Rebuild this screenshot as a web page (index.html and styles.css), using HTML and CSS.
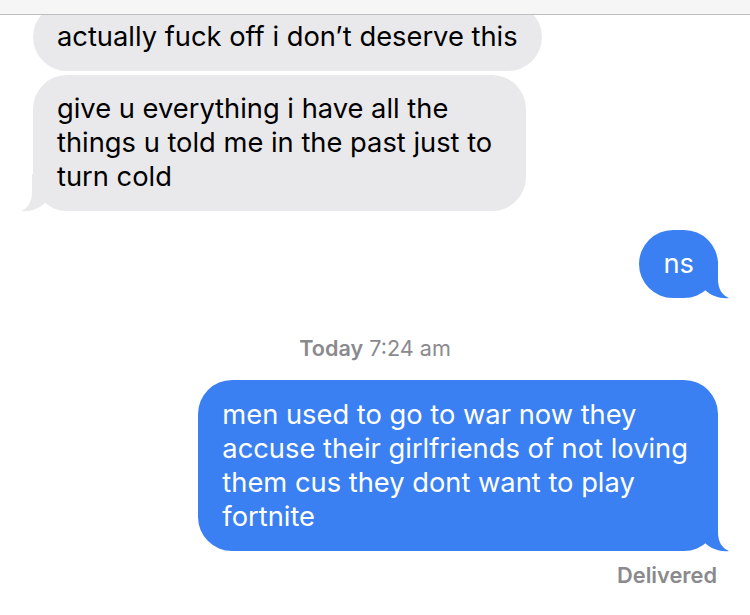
FILE: index.html
```html
<!DOCTYPE html>
<html lang="en">
<head>
<meta charset="utf-8">
<title>Messages</title>
<link rel="stylesheet" href="styles.css">
</head>
<body>
<div class="screen">
  <div class="topbar"></div>
  <div class="thread">
    <div class="msg in">actually fuck off i don’t deserve this</div>
    <div class="msg in gap-s wrapped">give u everything i have all the<br>things u told me in the past just to<br>turn cold
      <svg class="tail tail-in" viewBox="0 0 30 38"><path d="M17,0 L17,18 C17,28 21,34 28,37 C20,38 10,35 4,29 L4,0 Z"/></svg>
    </div>
    <div class="msg out gap-m">ns
      <svg class="tail tail-out" viewBox="0 0 30 38"><path d="M17,0 L17,18 C17,28 21,34 28,37 C20,38 10,35 4,29 L4,0 Z"/></svg>
    </div>
    <div class="stamp"><b>Today</b> 7:24 am</div>
    <div class="msg out gap-t wrapped tall">men used to go to war now they<br>accuse their girlfriends of not loving<br>them cus they dont want to play<br>fortnite
      <svg class="tail tail-out" viewBox="0 0 30 38"><path d="M17,0 L17,18 C17,28 21,34 28,37 C20,38 10,35 4,29 L4,0 Z"/></svg>
    </div>
    <div class="status">Delivered</div>
  </div>
</div>
</body>
</html>
```
FILE: styles.css
```css
* { box-sizing: border-box; }
html, body { margin: 0; padding: 0; background: #fff; }
body { font-family: "Inter", "Liberation Sans", sans-serif; }

.screen {
  position: relative;
  width: 750px;
  height: 615px;
  overflow: hidden;
  background: #fff;
}

.topbar {
  position: absolute;
  top: 0;
  left: 0;
  right: 0;
  height: 15px;
  background: #f6f6f6;
  border-bottom: 1px solid #bdbdbf;
  z-index: 2;
}

.thread {
  display: flex;
  flex-direction: column;
  padding-top: 3px;
}

.msg {
  position: relative;
  padding: 17px 24px;
  font-size: 27.3px;
  line-height: 34px;
  border-radius: 34px;
}

.msg.in {
  align-self: flex-start;
  margin-left: 33px;
  background: #e9e9eb;
  color: #000;
}

.msg.out {
  align-self: flex-end;
  margin-right: 32px;
  background: #3b80f3;
  color: #fff;
}

.msg.wrapped { padding-right: 30px; }
.msg.in.wrapped { padding-right: 34px; }
.msg.tall { padding-top: 18px; }

.gap-s { margin-top: 4px; }
.gap-m { margin-top: 19px; }
.gap-t { margin-top: 19px; }

.tail {
  position: absolute;
  bottom: -1px;
  width: 30px;
  height: 38px;
}
.tail-out { right: -13px; fill: #3b80f3; }
.tail-in { left: -14px; fill: #e9e9eb; transform: scaleX(-1); }

.stamp {
  align-self: center;
  margin-top: 37px;
  font-size: 21.6px;
  line-height: 26px;
  color: #8a8a8e;
}
.stamp b { font-weight: 600; }

.status {
  align-self: flex-end;
  margin-top: 11px;
  margin-right: 33px;
  font-size: 21.8px;
  line-height: 26px;
  font-weight: 600;
  color: #8a8a8e;
}
```
